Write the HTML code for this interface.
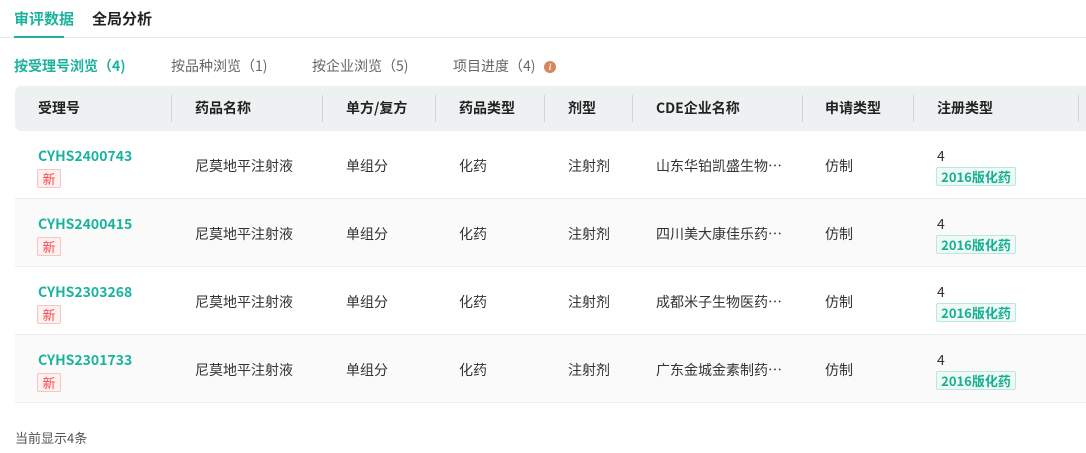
<!DOCTYPE html>
<html><head><meta charset="utf-8"><style>
*{margin:0;padding:0;box-sizing:border-box}
body{width:1086px;height:453px;background:#fff;font-family:"Noto Sans CJK SC","Liberation Sans",sans-serif;font-size:14px;line-height:20px;color:#333;position:relative;overflow:hidden}
.a{position:absolute;white-space:nowrap}
.teal{color:#1bb39e}
.b{font-weight:bold}
.hdr{position:absolute;left:15px;top:86px;width:1090px;height:45px;background:#eef1f2;border-radius:6px}
.sep{position:absolute;top:95px;width:1px;height:27px;background:#cfd6d8}
.row{position:absolute;left:15px;width:1071px;height:68px;border-bottom:1px solid #ececec}
.new{position:absolute;left:37px;width:24px;height:19px;border:1px solid #f8c3c3;background:#fff1f0;color:#f5484a;font-size:13px;line-height:17px;text-align:center;border-radius:2px}
.tag{position:absolute;left:936px;width:80px;height:19px;border:1px solid #b8e9dc;background:#effaf6;color:#15b092;font-size:13px;font-weight:bold;line-height:17px;text-align:center;border-radius:2px}
</style></head><body>
<div class="a teal b" style="left:14px;top:9px;font-size:15px">审评数据</div>
<div class="a b" style="left:92px;top:9px;font-size:15px;color:#222">全局分析</div>
<div class="a" style="left:0;top:37px;width:1086px;height:1px;background:#e8e8e8"></div>
<div class="a" style="left:14px;top:36px;width:50px;height:2px;background:#1bb39e"></div>
<div class="a teal b" style="left:14px;top:56px">按受理号浏览（4)</div>
<div class="a" style="left:149px;top:56px;color:#666;left:171px">按品种浏览（1)</div>
<div class="a" style="left:312px;top:56px;color:#666">按企业浏览（5)</div>
<div class="a" style="left:453px;top:56px;color:#666">项目进度（4)</div>
<div class="a" style="left:544px;top:61px;width:12px;height:12px;border-radius:50%;background:#d8875a;color:#fff;font-size:9px;line-height:12px;text-align:center;font-style:italic;font-weight:bold;font-family:'Liberation Serif',serif">i</div>
<div class="hdr"></div>
<div class="sep" style="left:171px"></div><div class="sep" style="left:322px"></div><div class="sep" style="left:435px"></div><div class="sep" style="left:544px"></div><div class="sep" style="left:632px"></div><div class="sep" style="left:802px"></div><div class="sep" style="left:913px"></div><div class="sep" style="left:1078px"></div>
<div class="a b" style="top:98px;left:38px;color:#222">受理号</div>
<div class="a b" style="top:98px;left:195px;color:#222">药品名称</div>
<div class="a b" style="top:98px;left:346px;color:#222">单方/复方</div>
<div class="a b" style="top:98px;left:459px;color:#222">药品类型</div>
<div class="a b" style="top:98px;left:568px;color:#222">剂型</div>
<div class="a b" style="top:98px;left:656px;color:#222">CDE企业名称</div>
<div class="a b" style="top:98px;left:825px;color:#222">申请类型</div>
<div class="a b" style="top:98px;left:937px;color:#222">注册类型</div>

<div class="row" style="top:131px;background:#fff"></div>
<div class="row" style="top:199px;background:#fafafa"></div>
<div class="row" style="top:267px;background:#fff"></div>
<div class="row" style="top:335px;background:#fafafa"></div>

<div class="a teal b" style="left:38px;top:146px">CYHS2400743</div><div class="new" style="top:169px">新</div>
<div class="a" style="left:195px;top:156px">尼莫地平注射液</div><div class="a" style="left:346px;top:156px">单组分</div><div class="a" style="left:459px;top:156px">化药</div><div class="a" style="left:568px;top:156px">注射剂</div><div class="a" style="left:656px;top:156px">山东华铂凯盛生物…</div><div class="a" style="left:825px;top:156px">仿制</div><div class="a" style="left:937px;top:146px">4</div><div class="tag" style="top:167px">2016版化药</div>

<div class="a teal b" style="left:38px;top:214px">CYHS2400415</div><div class="new" style="top:237px">新</div>
<div class="a" style="left:195px;top:224px">尼莫地平注射液</div><div class="a" style="left:346px;top:224px">单组分</div><div class="a" style="left:459px;top:224px">化药</div><div class="a" style="left:568px;top:224px">注射剂</div><div class="a" style="left:656px;top:224px">四川美大康佳乐药…</div><div class="a" style="left:825px;top:224px">仿制</div><div class="a" style="left:937px;top:214px">4</div><div class="tag" style="top:235px">2016版化药</div>

<div class="a teal b" style="left:38px;top:282px">CYHS2303268</div><div class="new" style="top:305px">新</div>
<div class="a" style="left:195px;top:292px">尼莫地平注射液</div><div class="a" style="left:346px;top:292px">单组分</div><div class="a" style="left:459px;top:292px">化药</div><div class="a" style="left:568px;top:292px">注射剂</div><div class="a" style="left:656px;top:292px">成都米子生物医药…</div><div class="a" style="left:825px;top:292px">仿制</div><div class="a" style="left:937px;top:282px">4</div><div class="tag" style="top:303px">2016版化药</div>

<div class="a teal b" style="left:38px;top:350px">CYHS2301733</div><div class="new" style="top:373px">新</div>
<div class="a" style="left:195px;top:360px">尼莫地平注射液</div><div class="a" style="left:346px;top:360px">单组分</div><div class="a" style="left:459px;top:360px">化药</div><div class="a" style="left:568px;top:360px">注射剂</div><div class="a" style="left:656px;top:360px">广东金城金素制药…</div><div class="a" style="left:825px;top:360px">仿制</div><div class="a" style="left:937px;top:350px">4</div><div class="tag" style="top:371px">2016版化药</div>

<div class="a" style="left:15px;top:428px;font-size:13px;color:#555">当前显示4条</div>
</body></html>
